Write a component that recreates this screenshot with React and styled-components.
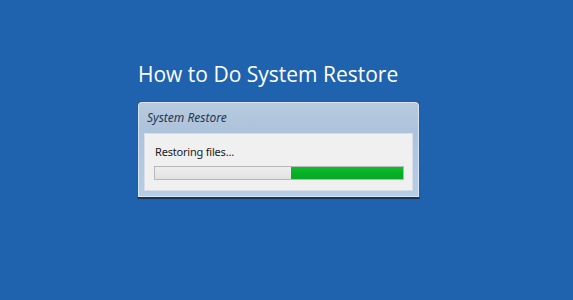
import { createGlobalStyle, styled } from "styled-components";

const GlobalStyle = createGlobalStyle`
  html, body {
    margin: 0;
    padding: 0;
    background: #1f63ae;
  }
`;

const Page = styled.div`
  width: 573px;
  height: 300px;
  box-sizing: border-box;
  padding: 61px 0 0 137px;
  background: #1f63ae;
  font-family: "Open Sans", "Noto Sans", sans-serif;
`;

const Heading = styled.h1`
  margin: 0 0 13px 1px;
  font-size: 21px;
  line-height: 27px;
  font-weight: 400;
  color: #ffffff;
`;

const Window = styled.div`
  width: 283px;
  height: 98px;
  box-sizing: border-box;
  border: 1px solid #3e5878;
  border-bottom: 2px solid #1d3450;
  border-radius: 5px 5px 1px 1px;
  background: linear-gradient(180deg, #b8cbde 0%, #adc3db 30%, #b6cde6 100%);
  box-shadow: inset 0 0 0 1px rgba(255, 255, 255, 0.5);
  padding: 0 6px;
  display: flex;
  flex-direction: column;
`;

const TitleBar = styled.div`
  height: 31px;
  display: flex;
  align-items: center;
  padding-left: 3px;
  font-family: "Noto Sans", "Open Sans", sans-serif;
  font-style: italic;
  font-size: 12px;
  color: #1e3552;
`;

const Panel = styled.div`
  height: 58px;
  box-sizing: border-box;
  background: #f0f0f0;
  border: 1px solid #d6dfe9;
  padding: 10px 9px 0 9px;
  display: flex;
  flex-direction: column;
  gap: 7px;
`;

const Status = styled.div`
  font-family: "Noto Sans", "Open Sans", sans-serif;
  font-size: 11px;
  letter-spacing: -0.2px;
  line-height: 15px;
  color: #1b1b1b;
  padding-left: 1px;
`;

const Track = styled.div`
  width: 250px;
  height: 14px;
  box-sizing: border-box;
  border: 1px solid #b8b8b8;
  background: linear-gradient(180deg, #eeeeee 0%, #e2e2e2 100%);
  display: flex;
  justify-content: flex-end;
`;

const Fill = styled.div`
  height: 100%;
  background: linear-gradient(180deg, #0fbf2f 0%, #06b025 50%, #0aa829 100%);
`;

export default function App() {
  const progress = 0.45;
  return (
    <>
      <GlobalStyle />
      <Page>
        <Heading>How to Do System Restore</Heading>
        <Window>
          <TitleBar>System Restore</TitleBar>
          <Panel>
            <Status>Restoring files...</Status>
            <Track>
              <Fill style={{ width: `${progress * 100}%` }} />
            </Track>
          </Panel>
        </Window>
      </Page>
    </>
  );
}
